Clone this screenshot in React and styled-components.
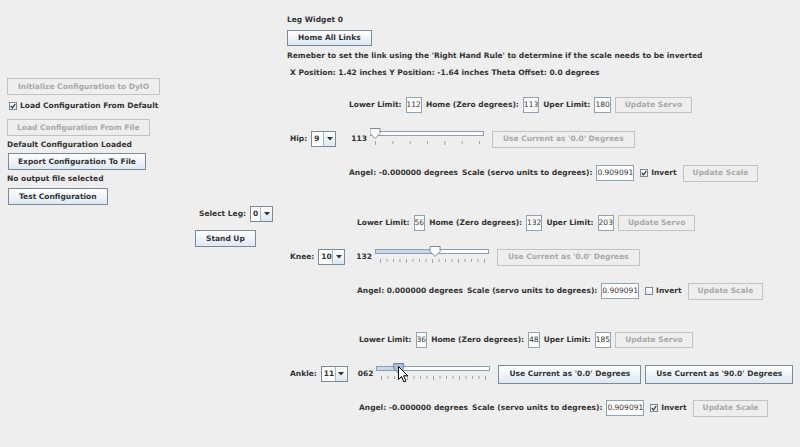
import React from "react";
import styled, { createGlobalStyle, css } from "styled-components";

const GlobalStyle = createGlobalStyle`
  body {
    margin: 0;
    background: #eeeeee;
  }
`;

const Page = styled.div`
  position: relative;
  width: 800px;
  height: 447px;
  overflow: hidden;
  display: flex;
  background: #eeeeee;
  color: #333333;
  font-family: "DejaVu Sans", "Liberation Sans", sans-serif;
  font-size: 7.5px;
  font-weight: bold;
  line-height: 12px;
`;

const LeftColumn = styled.div`
  width: 188px;
  padding: 78px 0 0 7px;
  display: flex;
  flex-direction: column;
  align-items: flex-start;
`;

const MiddleColumn = styled.div`
  width: 92px;
  padding-top: 205px;
  display: flex;
  flex-direction: column;
  align-items: flex-start;
`;

const RightColumn = styled.div`
  flex: 1;
  padding-top: 14px;
  display: flex;
  flex-direction: column;
  align-items: flex-start;
`;

const Label = styled.div`
  white-space: nowrap;
  margin-top: ${(p) => p.$mt || 0}px;
  margin-left: ${(p) => p.$ml || 0}px;
`;

const Button = styled.div`
  box-sizing: border-box;
  height: ${(p) => p.$h || 17}px;
  padding: 0 ${(p) => p.$px ?? 10}px;
  margin-top: ${(p) => p.$mt || 0}px;
  margin-left: ${(p) => p.$ml || 0}px;
  display: flex;
  align-items: center;
  justify-content: center;
  white-space: nowrap;
  border: 1px solid #7a8a99;
  background: linear-gradient(#ffffff, #dde8f3);
  color: #333333;
  ${(p) =>
    p.$disabled &&
    css`
      border-color: #c2c2c2;
      background: #eeeeee;
      color: #a8a8a8;
    `}
`;

const Row = styled.div`
  display: flex;
  align-items: center;
  gap: ${(p) => p.$gap ?? 4}px;
  height: 18px;
  padding-left: ${(p) => p.$indent || 0}px;
  margin-top: ${(p) => p.$mt || 0}px;
`;

const Field = styled.div`
  box-sizing: border-box;
  height: 16px;
  padding: 0;
  display: flex;
  align-items: center;
  border: 1px solid #8fa3b6;
  background: #ffffff;
  font-weight: normal;
  color: #333333;
`;

const Box = styled.div`
  box-sizing: border-box;
  width: 8px;
  height: 8px;
  border: 1px solid #7a8a99;
  background: linear-gradient(#ffffff, #dde8f3);
  display: flex;
  align-items: center;
  justify-content: center;
`;

const CheckRow = styled.div`
  display: flex;
  align-items: center;
  gap: 3px;
  height: 12px;
  margin-top: ${(p) => p.$mt || 0}px;
  margin-left: ${(p) => p.$ml || 0}px;
`;

const ComboBox = styled.div`
  box-sizing: border-box;
  width: ${(p) => p.$w}px;
  height: 16px;
  display: flex;
  border: 1px solid #7a8a99;
  background: #ffffff;
`;

const ComboText = styled.div`
  flex: 1;
  padding-left: 2px;
  display: flex;
  align-items: center;
`;

const ComboArrow = styled.div`
  width: 11px;
  border-left: 1px solid #a3b8cc;
  background: linear-gradient(#ffffff, #dde8f3);
  display: flex;
  align-items: center;
  justify-content: center;
`;

const Section = styled.div`
  display: flex;
  flex-direction: column;
  margin-top: ${(p) => p.$mt}px;
`;

const Cursor = styled.svg`
  position: absolute;
  left: 398px;
  top: 366px;
`;

const Check = ({ checked }) => (
  <Box>
    {checked && (
      <svg width="6" height="6" viewBox="0 0 6 6">
        <path d="M0.8 3 L2.5 4.8 L5.3 0.8" fill="none" stroke="#333" strokeWidth="1.2" />
      </svg>
    )}
  </Box>
);

const Combo = ({ value, w }) => (
  <ComboBox $w={w}>
    <ComboText>{value}</ComboText>
    <ComboArrow>
      <svg width="6" height="4" viewBox="0 0 6 4">
        <path d="M0 0 H6 L3 3.5 Z" fill="#333" />
      </svg>
    </ComboArrow>
  </ComboBox>
);

const Slider = ({ pos, ticks, active }) => {
  const w = 114;
  const x = 5 + pos * (w - 10);
  const step = (w - 10) / (ticks - 1);
  return (
    <svg width={w} height="18" viewBox={`0 0 ${w} 18`}>
      <rect x="0.5" y="3.5" width={w - 1} height="4" fill="#ffffff" stroke="#8c9fb2" />
      <rect x="1" y="4" width={Math.max(0, x - 1)} height="3" fill="#c8d8e8" />
      {Array.from({ length: ticks }).map((_, i) => (
        <line
          key={i}
          x1={5 + i * step + 0.5}
          x2={5 + i * step + 0.5}
          y1={13}
          y2={i % 4 === 0 ? 17 : 16}
          stroke="#9aa6b2"
        />
      ))}
      <path
        d={`M${x - 5} 0.5 H${x + 5} V5.5 L${x} 10.5 L${x - 5} 5.5 Z`}
        fill={active ? "#a9c0d8" : "#ffffff"}
        stroke={active ? "#6382a3" : "#7a8a99"}
      />
    </svg>
  );
};

const legs = [
  {
    name: "Hip:",
    channel: "9",
    comboW: 25,
    indent: 62,
    lower: "112",
    home: "113",
    upper: "180",
    value: "113",
    valueGap: 15,
    pos: 0,
    ticks: 7,
    enabled: false,
    angle: "-0.000000",
    invert: true,
    mt: 17,
  },
  {
    name: "Knee:",
    channel: "10",
    comboW: 27,
    indent: 70,
    lower: "56",
    home: "132",
    upper: "203",
    value: "132",
    valueGap: 11,
    pos: 0.53,
    ticks: 17,
    enabled: false,
    angle: "0.000000",
    invert: false,
    mt: 32,
  },
  {
    name: "Ankle:",
    channel: "11",
    comboW: 27,
    indent: 72,
    lower: "36",
    home: "48",
    upper: "185",
    value: "062",
    valueGap: 10,
    pos: 0.17,
    ticks: 17,
    enabled: true,
    angle: "-0.000000",
    invert: true,
    mt: 31,
  },
];

const LegSection = ({ leg }) => (
  <Section $mt={leg.mt}>
    <Row $indent={leg.indent}>
      <Label>Lower Limit:</Label>
      <Field>{leg.lower}</Field>
      <Label>Home (Zero degrees):</Label>
      <Field>{leg.home}</Field>
      <Label>Uper Limit:</Label>
      <Field>{leg.upper}</Field>
      <Button $disabled $h={16} $px={9}>
        Update Servo
      </Button>
    </Row>
    <Row $indent={3} $mt={16} $gap={0}>
      <Label>{leg.name}</Label>
      <Label $ml={4}>
        <Combo value={leg.channel} w={leg.comboW} />
      </Label>
      <Label $ml={leg.valueGap}>{leg.value}</Label>
      <Label $ml={3}>
        <Slider pos={leg.pos} ticks={leg.ticks} active={leg.enabled} />
      </Label>
      <Button $disabled={!leg.enabled} $ml={8} $h={leg.enabled ? 19 : 17}>
        Use Current as '0.0' Degrees
      </Button>
      {leg.enabled && (
        <Button $ml={4} $h={19}>
          Use Current as '90.0' Degrees
        </Button>
      )}
    </Row>
    <Row $indent={leg.indent} $mt={16}>
      <Label>Angel: {leg.angle} degrees</Label>
      <Label>Scale (servo units to degrees):</Label>
      <Field>0.909091</Field>
      <CheckRow $ml={2}>
        <Check checked={leg.invert} />
        Invert
      </CheckRow>
      <Button $disabled $ml={2} $px={9}>
        Update Scale
      </Button>
    </Row>
  </Section>
);

export default function App() {
  return (
    <Page>
      <GlobalStyle />
      <LeftColumn>
        <Button $disabled>Initialize Configuration to DyIO</Button>
        <CheckRow $mt={5} $ml={2}>
          <Check checked />
          Load Configuration From Default
        </CheckRow>
        <Button $disabled $mt={7} $px={9}>
          Load Configuration From File
        </Button>
        <Label $mt={3}>Default Configuration Loaded</Label>
        <Button $mt={2} $ml={1} $px={9}>
          Export Configuration To File
        </Button>
        <Label $mt={3}>No output file selected</Label>
        <Button $mt={3} $ml={1}>
          Test Configuration
        </Button>
      </LeftColumn>
      <MiddleColumn>
        <Row $indent={4}>
          <Label>Select Leg:</Label>
          <Combo value="0" w={23} />
        </Row>
        <Button $mt={7}>Stand Up</Button>
      </MiddleColumn>
      <RightColumn>
        <Label>Leg Widget 0</Label>
        <Button $mt={4} $h={16}>
          Home All Links
        </Button>
        <Label $mt={4}>
          Remeber to set the link using the 'Right Hand Rule' to determine if the scale needs to be inverted
        </Label>
        <Label $mt={5} $ml={3}>
          X Position: 1.42 inches Y Position: -1.64 inches Theta Offset: 0.0 degrees
        </Label>
        {legs.map((leg) => (
          <LegSection key={leg.name} leg={leg} />
        ))}
      </RightColumn>
      <Cursor width="11" height="17" viewBox="0 0 11 17">
        <path
          d="M0.5 0.5 V13.5 L3.5 10.5 L6 16 L8 15 L5.5 9.8 H9.8 Z"
          fill="#ffffff"
          stroke="#000000"
          strokeWidth="1"
        />
      </Cursor>
    </Page>
  );
}
